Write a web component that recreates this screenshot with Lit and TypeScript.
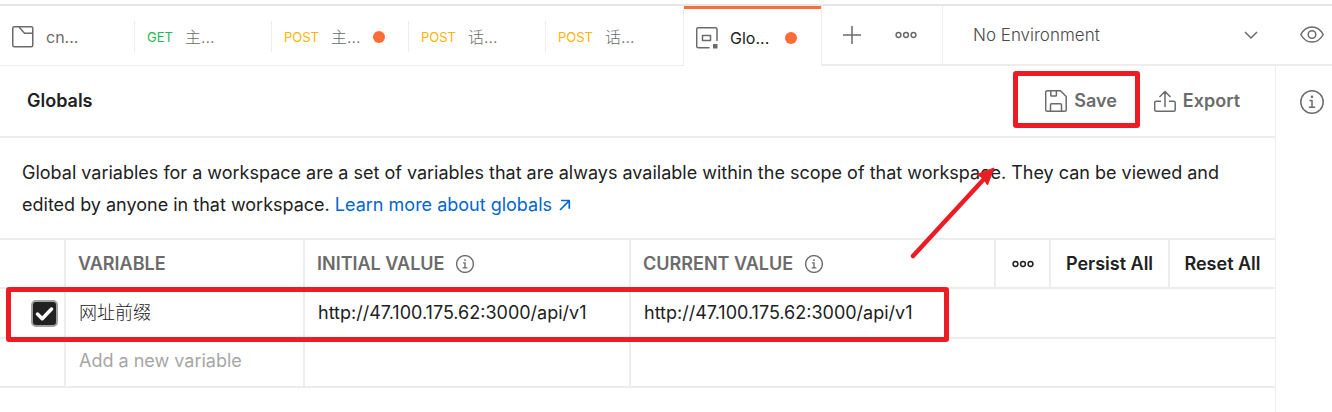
import { LitElement, html, css, svg, nothing } from "lit";
import { customElement } from "lit/decorators.js";
import { classMap } from "lit/directives/class-map.js";

interface Tab {
  kind: "folder" | "globals" | "GET" | "POST";
  name: string;
  dirty?: boolean;
  active?: boolean;
}

const TABS: Tab[] = [
  { kind: "folder", name: "cn..." },
  { kind: "GET", name: "主..." },
  { kind: "POST", name: "主...", dirty: true },
  { kind: "POST", name: "话..." },
  { kind: "POST", name: "话..." },
  { kind: "globals", name: "Glo...", dirty: true, active: true },
];

const icon = (size: number, body: unknown, width = 1.5) => html`<svg
  width=${size} height=${size} viewBox="0 0 ${size} ${size}" fill="none"
  stroke="currentColor" stroke-width=${width} stroke-linejoin="round" aria-hidden="true">${body}</svg>`;

const folderIcon = icon(22, svg`<rect x="0.75" y="0.75" width="20" height="20" rx="1.5"/><path d="M7 1l5.500 6.200h8.500"/>`);
const globalsIcon = icon(22, svg`<path d="M13.500 20.700H2.200a1.500 1.500 0 0 1-1.500-1.500V2.200A1.500 1.500 0 0 1 2.200.8h17.300a1.500 1.500 0 0 1 1.500 1.500V14"/><rect x="6.500" y="8.500" width="8" height="5"/><rect x="17" y="17" width="4.500" height="4.500" fill="currentColor" stroke="none"/>`);
const plusIcon = icon(18, svg`<path d="M9 0v18M0 9h18"/>`);
const dotsIcon = icon(22, svg`<circle cx="3.500" cy="11" r="2.400"/><circle cx="11" cy="11" r="2.400"/><circle cx="18.500" cy="11" r="2.400"/>`);
const chevronIcon = icon(14, svg`<path d="M1 4l6 6 6-6"/>`);
const eyeIcon = icon(24, svg`<path d="M.8 11.500C3.400 6.700 7.400 4 12 4s8.600 2.700 11.200 7.500c-2.600 4.800-6.600 7.500-11.200 7.500S3.400 16.300.8 11.500z"/><circle cx="12" cy="11.500" r="3.800"/>`);
const saveIcon = icon(22, svg`<path d="M2.200.8h13.300l5.700 5.700v13.200a1.500 1.500 0 0 1-1.500 1.500H2.200a1.500 1.500 0 0 1-1.500-1.500V2.200A1.500 1.500 0 0 1 2.200.8z"/><path d="M5.800 1v4.300a.8.800 0 0 0 .8.800h4a.8.800 0 0 0 .8-.8V1M5.500 21v-6.200a1 1 0 0 1 1-1h9a1 1 0 0 1 1 1V21"/>`);
const exportIcon = icon(22, svg`<path d="M7 11.200H2.200a1.500 1.500 0 0 0-1.500 1.500v7a1.500 1.500 0 0 0 1.500 1.500h17.500a1.500 1.500 0 0 0 1.500-1.500v-7a1.500 1.500 0 0 0-1.500-1.500H15M11 17V2M5.500 7L11 1.500 16.500 7"/>`);
const infoBody = svg`<circle cx="12" cy="12" r="11.200"/><path d="M9.500 10.500H12v6.500M8.800 17.200h6.400"/><circle cx="12" cy="6.800" r="1.300" fill="currentColor" stroke="none"/>`;
const infoIcon = icon(24, infoBody);
const smallInfoIcon = html`<svg width="18" height="18" viewBox="0 0 24 24" fill="none" stroke="currentColor" stroke-width="1.800" aria-hidden="true">${infoBody}</svg>`;
const linkArrow = icon(12, svg`<path d="M1 11L10 2M2 1.500h8.300v8.300"/>`, 1.7);

@customElement("app-root")
export class AppRoot extends LitElement {
  static styles = css`
    :host {
      display: block;
      position: relative;
      padding-top: 4px;
      min-height: 100vh;
      box-sizing: border-box;
      overflow: hidden;
      background: #fff;
      color: #212121;
      font: 18px/24px Inter, "Noto Sans CJK SC", sans-serif;
      --line: #ededed;
      --muted: #6b6b6b;
      --mark: #ed1c24;
    }
    * { box-sizing: border-box; }
    svg { display: block; flex: none; }
    button, input, select {
      font: inherit; color: inherit; background: none; border: 0; padding: 0; margin: 0; outline: 0;
    }
    .bar { display: flex; height: 62px; border-top: 2px solid #e6e6e6; color: var(--muted); }
    .tab {
      flex: 0 0 137px; display: flex; align-items: center; padding-top: 2px;
      border-bottom: 1px solid var(--line);
    }
    .tab:first-child { flex-basis: 135px; }
    .tab-body {
      flex: 1; min-width: 0; height: 31px; display: flex; align-items: center; gap: 12px;
      padding: 0 23px 0 12px; border-right: 1px solid var(--line); text-align: left; white-space: nowrap;
      font-size: 16px;
    }
    .tab-name { flex: 1; min-width: 0; font-weight: 300; }
    .latin { font-weight: 400; }
    .tab.last .tab-body { border-right-color: transparent; }
    .tab.active {
      flex-basis: 139px; border: 1px solid var(--line); border-width: 0 1px; color: #212121;
      padding-top: 0; flex-direction: column; align-items: stretch;
    }
    .tab.active::before { content: ""; height: 3px; background: #ff6c37; }
    .tab.active .tab-body { border: 0; flex: 1; height: auto; padding-right: 24px; }
    .tab.active svg { color: var(--muted); }
    .method { font-size: 13px; }
    .get { color: #1db954; }
    .post { color: #ffb400; }
    .dot { width: 12px; height: 12px; border-radius: 50%; background: #ff6c37; flex: none; }
    .tools {
      display: flex; align-items: center; gap: 34px; width: 121px; padding: 0 0 0 21px;
      border-right: 1px solid var(--line); border-bottom: 2px solid var(--line);
    }
    .env {
      flex: 1; display: flex; align-items: center; padding: 0 8px 0 30px; border-bottom: 2px solid var(--line);
    }
    .env-select { flex: 1; appearance: none; font-size: 17px; font-weight: 300; color: #4a4a4a; }
    .env .eye { margin-left: 42px; }
    .env svg { pointer-events: none; }
    .page { display: grid; grid-template-columns: minmax(0, 1fr) 57px; min-height: calc(100vh - 66px); }
    .side { border-left: 1px solid var(--line); padding: 24px 0 0 24px; color: var(--muted); }
    .head {
      display: flex; align-items: center; height: 72px; padding: 0 35px 0 27px;
      border-bottom: 2px solid var(--line);
    }
    .title { flex: 1; margin: 0; font-size: 18px; font-weight: 600; }
    .action { display: flex; align-items: center; gap: 7px; font-weight: 600; color: var(--muted); }
    .save { position: relative; margin-right: 37px; }
    .save::after {
      content: ""; position: absolute; inset: -18px -23px -15px -32px;
      border: 5px solid var(--mark); border-radius: 3px;
    }
    .about { margin: 0; padding: 19px 50px 17px 22px; line-height: 32px; }
    .link { color: #0265d2; text-decoration: none; }
    .link svg { display: inline-block; margin-left: 2px; }
    .vars { width: 100%; table-layout: fixed; border-collapse: separate; border-spacing: 0; border-top: 2px solid var(--line); }
    .c-check { width: 66px; }
    .c-name { width: 239px; }
    .c-initial { width: 326px; }
    .c-more { width: 55px; }
    .c-persist { width: 119px; }
    .c-reset { width: 105px; }
    th, td {
      height: 49px; padding: 0 0 0 12px; text-align: left;
      border-right: 2px solid var(--line); border-bottom: 2px solid var(--line);
    }
    th:last-child, td:last-child { border-right: 0; }
    th { font-weight: 600; color: var(--muted); }
    .th-text { display: flex; align-items: center; gap: 12px; }
    .th-button { padding: 0; color: #212121; }
    .th-button button { width: 100%; display: flex; justify-content: center; font-weight: 600; white-space: nowrap; }
    td { height: 50px; padding-left: 13px; }
    .new-row td { height: 49px; padding-bottom: 4px; }
    .cell { width: 100%; height: 24px; display: block; }
    .cjk { font-weight: 300; }
    .cell::placeholder { color: #a6a6a6; opacity: 1; }
    .check-cell { padding: 0 0 0 31px; }
    .check {
      appearance: none; display: block; width: 27px; height: 27px; border: 2px solid #a0a0a0; border-radius: 5px;
      background: #212121 url("data:image/svg+xml,%3Csvg xmlns='http://www.w3.org/2000/svg' viewBox='0 0 23 23' fill='none' stroke='white' stroke-width='3.5' stroke-linecap='round' stroke-linejoin='round'%3E%3Cpath d='M4.500 12l4.700 4.700L18.500 7'/%3E%3C/svg%3E") center / 23px 23px;
    }
    .table-wrap { position: relative; }
    .row-mark {
      position: absolute; left: 6px; top: 49px; width: 943px; height: 55px;
      border: 5px solid var(--mark); border-radius: 3px; pointer-events: none;
    }
    .arrow { position: absolute; left: 908px; top: 164px; pointer-events: none; }
  `;

  private renderTab(tab: Tab, index: number) {
    const lead =
      tab.kind === "folder" ? folderIcon
      : tab.kind === "globals" ? globalsIcon
      : html`<span class="method ${tab.kind.toLowerCase()}">${tab.kind}</span>`;
    return html`
      <div class=${classMap({ tab: true, active: !!tab.active, last: index === TABS.length - 2 })}>
        <button class="tab-body" role="tab" aria-selected=${tab.active ? "true" : "false"}>
          ${lead}
          <span class=${classMap({ "tab-name": true, latin: /^[A-Za-z]/.test(tab.name) })}>${tab.name}</span>
          ${tab.dirty ? html`<span class="dot"></span>` : nothing}
        </button>
      </div>`;
  }

  render() {
    return html`
      <div class="bar">
        ${TABS.map((tab, i) => this.renderTab(tab, i))}
        <div class="tools">
          <button aria-label="New tab">${plusIcon}</button>
          <button aria-label="Tab options">${dotsIcon}</button>
        </div>
        <div class="env">
          <select class="env-select" aria-label="Environment"><option>No Environment</option></select>
          ${chevronIcon}
          <button class="eye" aria-label="Environment quick look">${eyeIcon}</button>
        </div>
      </div>
      <div class="page">
        <main>
          <header class="head">
            <h1 class="title">Globals</h1>
            <button class="action save">${saveIcon}Save</button>
            <button class="action">${exportIcon}Export</button>
          </header>
          <p class="about">
            Global variables for a workspace are a set of variables that are always available within the scope of that
            workspace. They can be viewed and edited by anyone in that workspace.
            <a class="link" href="#globals">Learn more about globals ${linkArrow}</a>
          </p>
          <div class="table-wrap">
            <table class="vars">
              <colgroup>
                <col class="c-check" /><col class="c-name" /><col class="c-initial" /><col />
                <col class="c-more" /><col class="c-persist" /><col class="c-reset" />
              </colgroup>
              <thead>
                <tr>
                  <th></th>
                  <th>VARIABLE</th>
                  <th><span class="th-text">INITIAL VALUE ${smallInfoIcon}</span></th>
                  <th><span class="th-text">CURRENT VALUE ${smallInfoIcon}</span></th>
                  <th class="th-button"><button aria-label="More options">${dotsIcon}</button></th>
                  <th class="th-button"><button>Persist All</button></th>
                  <th class="th-button"><button>Reset All</button></th>
                </tr>
              </thead>
              <tbody>
                <tr>
                  <td class="check-cell"><input class="check" type="checkbox" checked aria-label="Enable variable" /></td>
                  <td><input class="cell cjk" aria-label="Variable" value="网址前缀" /></td>
                  <td><input class="cell" aria-label="Initial value" value="http://47.100.175.62:3000/api/v1" /></td>
                  <td colspan="4"><input class="cell" aria-label="Current value" value="http://47.100.175.62:3000/api/v1" /></td>
                </tr>
                <tr class="new-row">
                  <td></td>
                  <td><input class="cell" aria-label="New variable" placeholder="Add a new variable" /></td>
                  <td></td>
                  <td colspan="4"></td>
                </tr>
              </tbody>
            </table>
            <div class="row-mark"></div>
          </div>
        </main>
        <aside class="side"><button aria-label="Details">${infoIcon}</button></aside>
      </div>
      <svg class="arrow" width="90" height="96" viewBox="0 0 90 96" aria-hidden="true">
        <path d="M5 92L76 15" stroke="#ed1c24" stroke-width="4.500" stroke-linecap="round" />
        <path d="M86 4L69 10.500L74 13.500L77 17L79.500 21z" fill="#ed1c24" stroke="#ed1c24" />
      </svg>
    `;
  }
}
